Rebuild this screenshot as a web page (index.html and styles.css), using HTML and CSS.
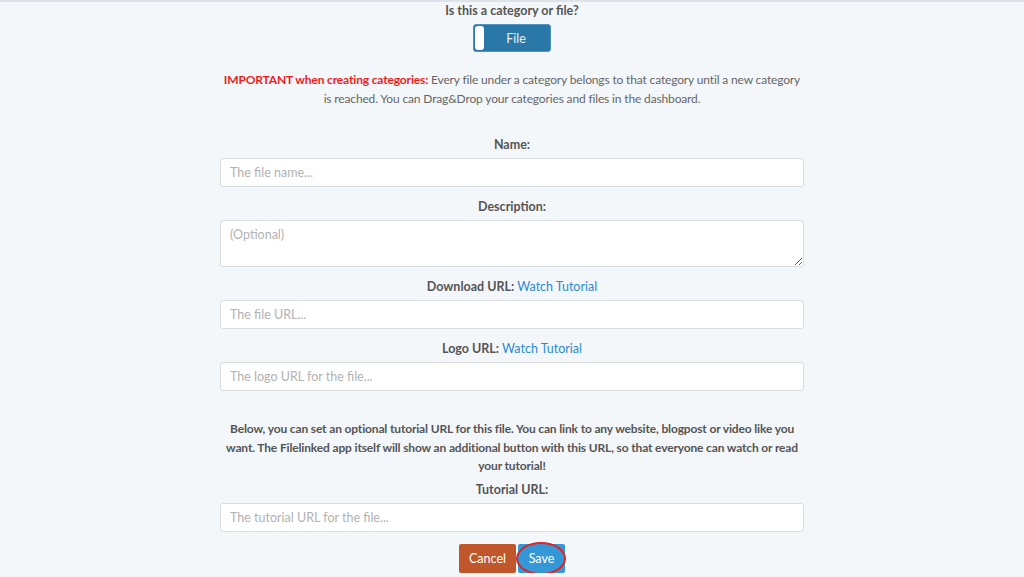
FILE: index.html
```html
<!DOCTYPE html>
<html lang="en">
<head>
    <meta charset="utf-8"/>
    <link rel="stylesheet" href="styles.css">
</head>
<body>
    <div class="topline"></div>
    <form class="file-form">
        <p class="label first">Is this a category or file?</p>
        <div class="switch">
            <span class="knob"></span>
            <span class="switch-text">File</span>
        </div>

        <p class="notice"><strong>IMPORTANT when creating categories:</strong> Every file under a category belongs to that category until a new category is reached. You can Drag&amp;Drop your categories and files in the dashboard.</p>

        <p class="label">Name:</p>
        <input class="field" type="text" placeholder="The file name...">

        <p class="label">Description:</p>
        <textarea class="field area" placeholder="(Optional)"></textarea>

        <p class="label">Download URL: <a href="#">Watch Tutorial</a></p>
        <input class="field" type="text" placeholder="The file URL...">

        <p class="label">Logo URL: <a href="#">Watch Tutorial</a></p>
        <input class="field" type="text" placeholder="The logo URL for the file...">

        <p class="info">Below, you can set an optional tutorial URL for this file. You can link to any website, blogpost or video like you want. The Filelinked app itself will show an additional button with this URL, so that everyone can watch or read your tutorial!</p>

        <p class="label">Tutorial URL:</p>
        <input class="field" type="text" placeholder="The tutorial URL for the file...">

        <div class="buttons">
            <button type="button" class="btn cancel">Cancel</button>
            <button type="button" class="btn save">Save<span class="ring"></span></button>
        </div>
    </form>
</body>
</html>
```

FILE: styles.css
```css
body {
    margin: 0;
    background-color: #f3f7fa;
    font-family: Lato, sans-serif;
    color: #555;
}

.topline {
    height: 2px;
    background-color: #dde3e8;
}

.file-form {
    width: 584px;
    margin: 0 auto;
    display: flex;
    flex-direction: column;
    align-items: center;
}

.label {
    margin: 0;
    font-size: 12.5px;
    font-weight: bold;
    line-height: 16px;
    color: #555;
}

.label.first {
    margin-top: 1px;
}

.label a {
    color: #2b8bd1;
    text-decoration: none;
    font-weight: normal;
}

.switch {
    margin-top: 5px;
    width: 76px;
    height: 26px;
    border: 1px solid #4f92c0;
    border-radius: 3px;
    background-color: #2a78a8;
    display: flex;
    align-items: center;
    position: relative;
}

.knob {
    position: absolute;
    left: 1px;
    top: 1px;
    bottom: 1px;
    width: 9px;
    background-color: #fff;
    border-radius: 3px;
}

.switch-text {
    flex: 1;
    text-align: center;
    color: #e8f1f7;
    font-size: 12.5px;
    padding-left: 8px;
}

.notice {
    margin: 18px 0 0;
    font-size: 12px;
    letter-spacing: -0.15px;
    line-height: 19px;
    text-align: center;
    color: #666;
}

.notice strong {
    color: #f01c1c;
    font-weight: bold;
}

.notice + .label {
    margin-top: 29px;
}

.field {
    display: block;
    box-sizing: border-box;
    width: 100%;
    height: 29px;
    margin: 5px 0 12px;
    padding: 0 9px;
    border: 1px solid #d9dde0;
    border-radius: 3px;
    background-color: #fff;
    font-family: Lato, sans-serif;
    font-size: 12.5px;
    color: #555;
    outline: none;
}

.field::placeholder {
    color: #b2b2b2;
}

.area {
    height: 47px;
    padding-top: 6px;
    resize: vertical;
}

.info {
    margin: 17px 0 6px;
    font-size: 12px;
    letter-spacing: -0.15px;
    font-weight: bold;
    line-height: 18.5px;
    text-align: center;
    color: #555;
}

.buttons {
    display: flex;
    gap: 2px;
}

.btn {
    height: 29px;
    border: none;
    border-radius: 2px;
    color: #fff;
    font-family: Lato, sans-serif;
    font-size: 12.5px;
    padding: 0;
}

.cancel {
    width: 57px;
    background-color: #c0572b;
}

.save {
    width: 47px;
    background-color: #3498d8;
    position: relative;
}

/* red annotation circle drawn around the save button */
.ring {
    position: absolute;
    left: -2px;
    top: -2px;
    width: 46px;
    height: 29px;
    border: 2px solid #e3211f;
    border-radius: 50%;
}
```
